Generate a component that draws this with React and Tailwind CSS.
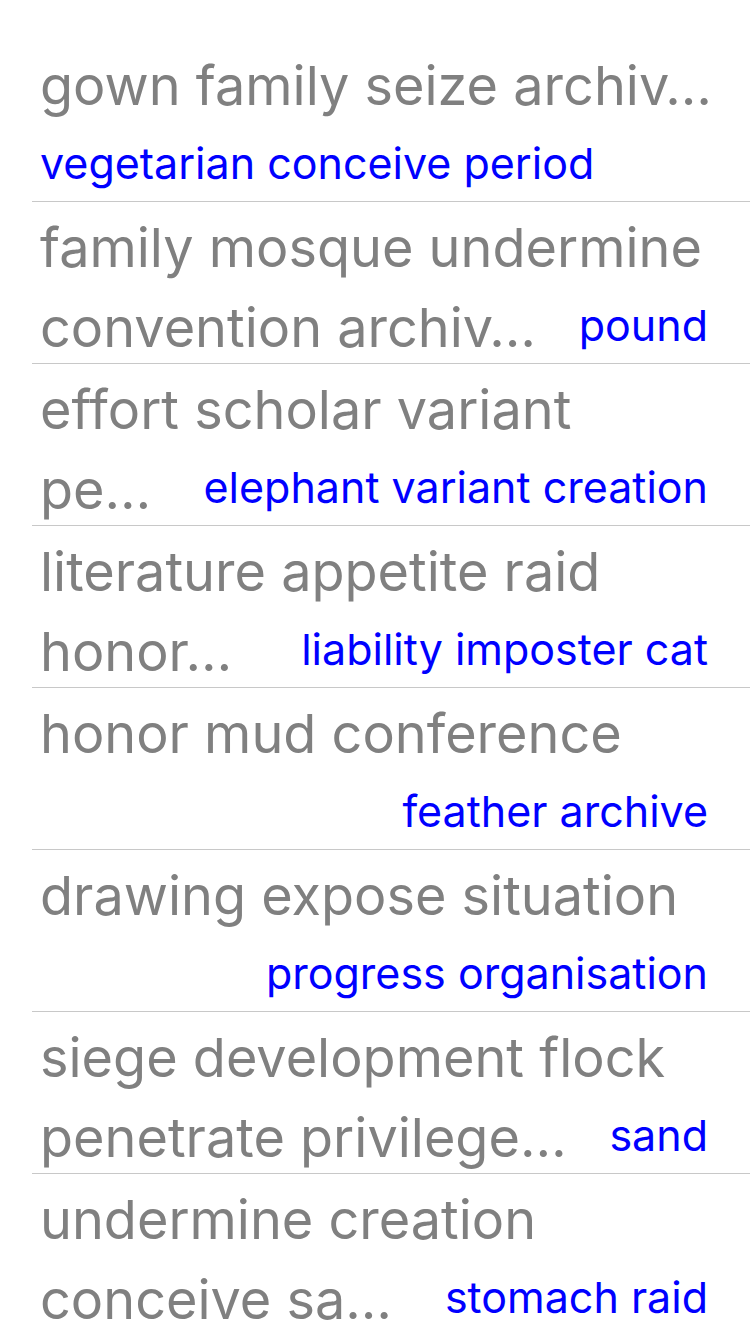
import React from "react";

const rows = [
  { l1: "gown family seize archiv…", l2: "", detail: "vegetarian conceive period", align: "start" },
  { l1: "family mosque undermine", l2: "convention archiv…", detail: "pound", align: "between" },
  { l1: "effort scholar variant", l2: "pe…", detail: "elephant variant creation", align: "between" },
  { l1: "literature appetite raid", l2: "honor…", detail: "liability imposter cat", align: "between" },
  { l1: "honor mud conference", l2: "", detail: "feather archive", align: "end" },
  { l1: "drawing expose situation", l2: "", detail: "progress organisation", align: "end" },
  { l1: "siege development flock", l2: "penetrate privilege…", detail: "sand", align: "between" },
  { l1: "undermine creation", l2: "conceive sa…", detail: "stomach raid", align: "between" },
];

export default function App() {
  return (
    <div
      className="w-[750px] h-[1334px] overflow-hidden bg-white pt-10"
      style={{ fontFamily: "Inter, 'Noto Sans', sans-serif" }}
    >
      {rows.map((r, i) => (
        <div key={i} className="ml-8 h-[162px] border-b border-[#c8c8c8] pl-2 pr-[42px] pt-[5px]">
          <div className="h-[81px] text-[54px] leading-[81px] text-[#808080] whitespace-nowrap">{r.l1}</div>
          <div
            className={
              "flex items-start whitespace-nowrap " +
              (r.align === "start" ? "justify-start" : r.align === "end" ? "justify-end" : "justify-between")
            }
          >
            {r.l2 ? (
              <span className="-mt-px text-[54px] leading-[81px] text-[#808080]">{r.l2}</span>
            ) : null}
            <span className="mt-[11px] text-[43px] leading-[53px] text-[#0000ff]">{r.detail}</span>
          </div>
        </div>
      ))}
    </div>
  );
}
